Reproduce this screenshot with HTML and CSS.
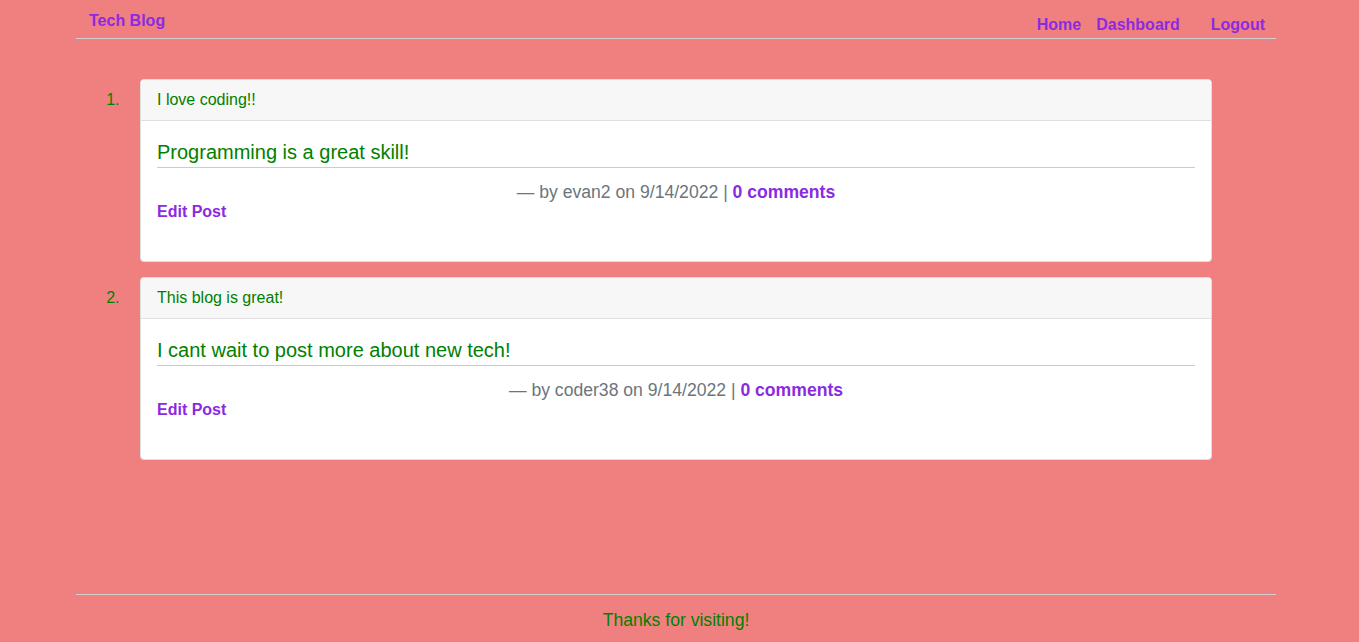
FILE: index.html
```html
<!DOCTYPE html>
<html lang="en">
<head>
<meta charset="utf-8">
<title>Tech Blog</title>
<link rel="stylesheet" href="styles.css">
</head>
<body>
<div class="page">
  <header class="site-header">
    <a class="brand" href="#">Tech Blog</a>
    <nav class="nav">
      <a class="nav-home" href="#">Home</a>
      <a class="nav-dash" href="#">Dashboard</a>
      <a href="#">Logout</a>
    </nav>
  </header>
  <main class="main">
    <ol class="posts">
      <li class="post-item">
        <article class="card">
          <div class="card-header">I love coding!!</div>
          <div class="card-body">
            <h2 class="post-title">Programming is a great skill!</h2>
            <p class="meta">— by evan2 on 9/14/2022 | <a href="#">0 comments</a></p>
            <a class="edit" href="#">Edit Post</a>
          </div>
        </article>
      </li>
      <li class="post-item">
        <article class="card">
          <div class="card-header">This blog is great!</div>
          <div class="card-body">
            <h2 class="post-title">I cant wait to post more about new tech!</h2>
            <p class="meta">— by coder38 on 9/14/2022 | <a href="#">0 comments</a></p>
            <a class="edit" href="#">Edit Post</a>
          </div>
        </article>
      </li>
    </ol>
  </main>
  <footer class="site-footer">Thanks for visiting!</footer>
</div>
</body>
</html>
```
FILE: styles.css
```css
html, body {
  margin: 0;
  padding: 0;
}
body {
  background: #f08080;
  font-family: "Liberation Sans", Arial, sans-serif;
  color: #008000;
}
a {
  color: #8a2be2;
  text-decoration: none;
  font-weight: bold;
}
.page {
  display: flex;
  flex-direction: column;
  min-height: 642px;
  margin: 0 83px 0 76px;
}
.site-header {
  display: flex;
  justify-content: space-between;
  align-items: flex-start;
  height: 38px;
  border-bottom: 1px solid #cfcfcf;
  padding: 0 11px 0 13px;
  box-sizing: content-box;
}
.brand {
  font-size: 16px;
  line-height: 18px;
  padding-top: 12px;
}
.nav {
  display: flex;
  padding-top: 16px;
  font-size: 16px;
  line-height: 18px;
}
.nav-home { margin-right: 15px; }
.nav-dash { margin-right: 31px; }
.main {
  flex: 1;
}
.posts {
  margin: 40px 0 0 0;
  padding: 0 64px 0 48px;
  font-size: 16px;
  color: #008000;
}
.post-item {
  margin-bottom: 15px;
}
.post-item::marker {
  line-height: 40px;
}
.card {
  margin-left: 16px;
  background: #fff;
  border: 1px solid #dfdfdf;
  border-radius: 4px;
  overflow: hidden;
}
.card-header {
  background: #f7f7f7;
  border-bottom: 1px solid #dfdfdf;
  padding: 11px 16px;
  line-height: 18px;
  font-size: 16px;
}
.card-body {
  padding: 19px 16px 40px;
}
.post-title {
  margin: 0;
  font-size: 20px;
  font-weight: normal;
  line-height: 24px;
  padding-bottom: 3px;
  border-bottom: 1px solid #cccccc;
}
.meta {
  margin: 14px 0 0;
  text-align: center;
  color: #6c757d;
  font-size: 17.6px;
  line-height: 20px;
}
.edit {
  display: block;
  margin-top: 1px;
  font-size: 16px;
  line-height: 18px;
}
.site-footer {
  border-top: 1px solid #cfcfcf;
  text-align: center;
  font-size: 17.6px;
  line-height: 20px;
  padding: 15px 0 12px;
}
```
